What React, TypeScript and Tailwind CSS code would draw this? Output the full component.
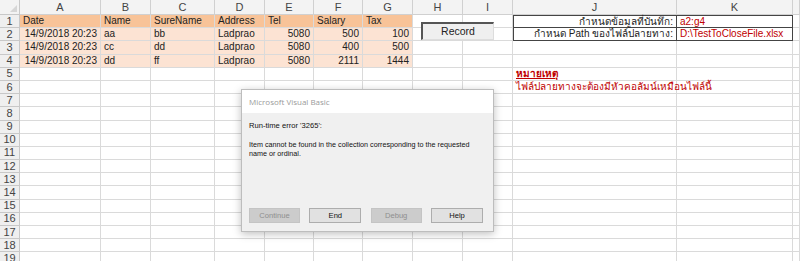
import React from "react"

const cols = [
  { key: "A", w: "w-[81px]" },
  { key: "B", w: "w-[50px]" },
  { key: "C", w: "w-[64px]" },
  { key: "D", w: "w-[50px]" },
  { key: "E", w: "w-[49px]" },
  { key: "F", w: "w-[49px]" },
  { key: "G", w: "w-[50px]" },
  { key: "H", w: "w-[50px]" },
  { key: "I", w: "w-[50px]" },
  { key: "J", w: "w-[164px]" },
  { key: "K", w: "w-[116px]" },
  { key: "", w: "flex-1" },
]

type Cell = { text: string; align?: "left" | "right"; className?: string }

const dataRows: Record<number, Record<string, Cell>> = {
  1: {
    A: { text: "Date" },
    B: { text: "Name" },
    C: { text: "SureName" },
    D: { text: "Address" },
    E: { text: "Tel" },
    F: { text: "Salary" },
    G: { text: "Tax" },
    J: { text: "กำหนดข้อมูลที่บันทึก:", align: "right" },
    K: { text: "a2:g4", className: "text-[#c00000]" },
  },
  2: {
    A: { text: "14/9/2018 20:23", align: "right" },
    B: { text: "aa" },
    C: { text: "bb" },
    D: { text: "Ladprao" },
    E: { text: "5080", align: "right" },
    F: { text: "500", align: "right" },
    G: { text: "100", align: "right" },
    J: { text: "กำหนด Path ของไฟล์ปลายทาง:", align: "right" },
    K: { text: "D:\\TestToCloseFile.xlsx", className: "text-[#c00000]" },
  },
  3: {
    A: { text: "14/9/2018 20:23", align: "right" },
    B: { text: "cc" },
    C: { text: "dd" },
    D: { text: "Ladprao" },
    E: { text: "5080", align: "right" },
    F: { text: "400", align: "right" },
    G: { text: "500", align: "right" },
  },
  4: {
    A: { text: "14/9/2018 20:23", align: "right" },
    B: { text: "dd" },
    C: { text: "ff" },
    D: { text: "Ladprao" },
    E: { text: "5080", align: "right" },
    F: { text: "2111", align: "right" },
    G: { text: "1444", align: "right" },
  },
  5: {
    J: { text: "หมายเหตุ", className: "text-[#c00000] font-bold underline" },
  },
  6: {
    J: { text: "ไฟล์ปลายทางจะต้องมีหัวคอลัมน์เหมือนไฟล์นี้", className: "text-[#c00000]" },
  },
}

const tinted = ["A", "B", "C", "D", "E", "F", "G"]

function cellBg(row: number, col: string) {
  if (!tinted.includes(col)) return ""
  if (row === 1) return "bg-[#f8c398]"
  if (row <= 4) return "bg-[#fce3d3]"
  return ""
}

function cellBorder(row: number, col: string) {
  const boxed = (col === "J" || col === "K") && (row === 1 || row === 2)
  let cls = boxed ? "border-b border-r border-b-[#444] border-r-[#444]" : "border-b border-r border-[#dadada]"
  if (boxed && row === 1) cls += " border-t border-t-[#444]"
  if (boxed && col === "J") cls += " border-l border-l-[#444]"
  return cls
}

function DialogButton({ label, disabled }: { label: string; disabled?: boolean }) {
  return (
    <div
      className={
        disabled
          ? "flex h-[15px] w-[51px] items-center justify-center border border-[#c4c4c4] bg-[#cccccc] text-[#8f8f8f]"
          : "flex h-[15px] w-[52px] items-center justify-center border border-[#adadad] bg-[#e1e1e1] text-[#111]"
      }
    >
      {label}
    </div>
  )
}

export default function App() {
  const rows = Array.from({ length: 19 }, (_, i) => i + 1)
  return (
    <div className="relative h-[261px] w-[800px] overflow-hidden bg-white font-['Liberation_Sans',sans-serif] text-[10px] text-[#222]">
      {/* column headers */}
      <div className="flex h-[15px] bg-[#f3f3f3]">
        <div className="relative w-[20px] border-b border-r border-[#c8c8c8]">
          <div className="absolute bottom-[2px] right-[2px] h-0 w-0 border-b-[7px] border-l-[7px] border-b-[#d6d6d6] border-l-transparent" />
        </div>
        {cols.map((c, i) => (
          <div
            key={i}
            className={`${c.w} flex items-center justify-center border-b border-r border-[#d0d0d0] text-[11px] text-[#444]`}
          >
            {c.key}
          </div>
        ))}
      </div>

      {rows.map((r) => (
        <div key={r} className="flex h-[13.2px]">
          <div className="flex w-[20px] items-center justify-center border-b border-r border-[#c8c8c8] bg-[#efefef] text-[11px] leading-none text-[#444]">
            {r}
          </div>
          {cols.map((c, i) => {
            const cell = dataRows[r]?.[c.key]
            return (
              <div
                key={i}
                className={`${c.w} ${cellBg(r, c.key)} ${cellBorder(r, c.key)} flex items-center whitespace-nowrap px-[3px] leading-none ${
                  cell?.align === "right" ? "justify-end" : "justify-start"
                } ${cell ? "relative z-10" : ""}`}
              >
                {cell && <span className={cell.className}>{cell.text}</span>}
              </div>
            )
          })}
        </div>
      ))}

      {/* Record button */}
      <div className="absolute left-[421px] top-[22px] z-20 flex h-[18px] w-[73px] items-center justify-center border-l-2 border-t-2 border-b border-r border-l-[#555] border-t-[#555] border-b-[#ddd] border-r-[#ddd] bg-[#efefef] text-[10.5px] text-[#222]">
        Record
      </div>

      {/* error dialog */}
      <div className="absolute left-[241px] top-[89px] z-30 flex h-[143px] w-[253px] flex-col border border-[#bdbdbd] bg-[#f0f0f0] shadow-[0_2px_8px_rgba(0,0,0,0.25)]">
        <div className="flex h-[23px] items-center bg-white px-[7px] font-['Open_Sans',sans-serif] text-[8px] text-[#9a9a9a]">
          Microsoft Visual Basic
        </div>
        <div className="flex flex-1 flex-col px-[7px] pt-[8px] text-[7.2px] leading-[9px] text-[#111]">
          <p className="text-[7.6px]">Run-time error '3265':</p>
          <p className="mt-[10px]">
            Item cannot be found in the collection corresponding to the requested name or ordinal.
          </p>
          <div className="mb-[8px] mt-auto flex justify-between pr-[3px] text-[7.6px]">
            <DialogButton label="Continue" disabled />
            <DialogButton label="End" />
            <DialogButton label="Debug" disabled />
            <DialogButton label="Help" />
          </div>
        </div>
      </div>
    </div>
  )
}
